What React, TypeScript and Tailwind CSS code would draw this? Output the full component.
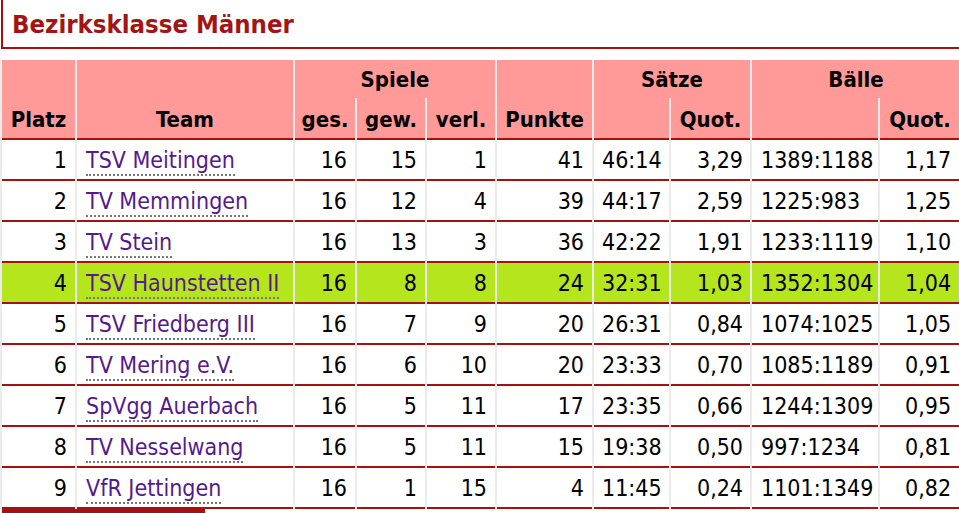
import React from "react";

type Row = [number, string, number, number, number, number, string, string, string, string];

const rows: Row[] = [
  [1, "TSV Meitingen", 16, 15, 1, 41, "46:14", "3,29", "1389:1188", "1,17"],
  [2, "TV Memmingen", 16, 12, 4, 39, "44:17", "2,59", "1225:983", "1,25"],
  [3, "TV Stein", 16, 13, 3, 36, "42:22", "1,91", "1233:1119", "1,10"],
  [4, "TSV Haunstetten II", 16, 8, 8, 24, "32:31", "1,03", "1352:1304", "1,04"],
  [5, "TSV Friedberg III", 16, 7, 9, 20, "26:31", "0,84", "1074:1025", "1,05"],
  [6, "TV Mering e.V.", 16, 6, 10, 20, "23:33", "0,70", "1085:1189", "0,91"],
  [7, "SpVgg Auerbach", 16, 5, 11, 17, "23:35", "0,66", "1244:1309", "0,95"],
  [8, "TV Nesselwang", 16, 5, 11, 15, "19:38", "0,50", "997:1234", "0,81"],
  [9, "VfR Jettingen", 16, 1, 15, 4, "11:45", "0,24", "1101:1349", "0,82"],
];

const font = {
  fontFamily: "'DejaVu Sans Condensed', 'DejaVu Sans', sans-serif",
};

export default function App() {
  return (
    <div
      className="w-[959px] h-[513px] overflow-hidden bg-white font-stretch-condensed"
      style={font}
    >
      <div className="ml-px border-l-2 border-b-2 border-[#a51111] pl-[9px] pt-[10px] pb-[8px]">
        <h1 className="text-[25.5px] leading-[29px] font-bold text-[#a31515]">
          Bezirksklasse Männer
        </h1>
      </div>
      <table className="mt-[11px] table-fixed border-separate border-spacing-x-[2px] border-spacing-y-0 bg-[#ebebeb] w-[962px] text-[22px] leading-[26px] text-black">
        <colgroup>
          <col className="w-[73px]" />
          <col className="w-[216px]" />
          <col className="w-[60px]" />
          <col className="w-[68px]" />
          <col className="w-[68px]" />
          <col className="w-[95px]" />
          <col className="w-[75px]" />
          <col className="w-[79px]" />
          <col className="w-[126px]" />
          <col className="w-[80px]" />
        </colgroup>
        <thead>
          <tr className="h-[38px]">
            <th rowSpan={2} className="bg-[#ff9a98] border-b-2 border-[#a51111] align-bottom pb-[5px] text-center font-bold">
              Platz
            </th>
            <th rowSpan={2} className="bg-[#ff9a98] border-b-2 border-[#a51111] align-bottom pb-[5px] text-center font-bold">
              Team
            </th>
            <th colSpan={3} className="bg-[#ff9a98] align-middle pt-[2px] text-center font-bold">
              Spiele
            </th>
            <th rowSpan={2} className="bg-[#ff9a98] border-b-2 border-[#a51111] align-bottom pb-[5px] text-center font-bold">
              Punkte
            </th>
            <th colSpan={2} className="bg-[#ff9a98] align-middle pt-[2px] text-center font-bold">
              Sätze
            </th>
            <th colSpan={2} className="bg-[#ff9a98] align-middle pt-[2px] text-center font-bold">
              Bälle
            </th>
          </tr>
          <tr className="h-[42px]">
            {["ges.", "gew.", "verl.", "", "Quot.", "", "Quot."].map((t, i) => (
              <th
                key={i}
                className="bg-[#ff9a98] border-b-2 border-[#a51111] align-bottom pb-[5px] text-center font-bold"
              >
                {t}
              </th>
            ))}
          </tr>
        </thead>
        <tbody className="text-[23px]">
          {rows.map((r) => {
            const bg = r[0] === 4 ? "bg-[#b5e61d]" : "bg-white";
            const cell = `${bg} border-b-2 border-[#a51111] align-middle pt-px`;
            return (
              <tr key={r[0]} className="h-[41px]">
                <td className={`${cell} text-right pr-[8px]`}>{r[0]}</td>
                <td className={`${cell} text-left pl-[9px]`}>
                  <a className="text-[#551a8b] border-b-2 border-dotted border-[#777777] pb-px">
                    {r[1]}
                  </a>
                </td>
                <td className={`${cell} text-right pr-[8px]`}>{r[2]}</td>
                <td className={`${cell} text-right pr-[8px]`}>{r[3]}</td>
                <td className={`${cell} text-right pr-[8px]`}>{r[4]}</td>
                <td className={`${cell} text-right pr-[8px]`}>{r[5]}</td>
                <td className={`${cell} text-left pl-[8px]`}>{r[6]}</td>
                <td className={`${cell} text-right pr-[7px]`}>{r[7]}</td>
                <td className={`${cell} text-left pl-[9px]`}>{r[8]}</td>
                <td className={`${cell} text-right pr-[9px]`}>{r[9]}</td>
              </tr>
            );
          })}
        </tbody>
      </table>
      <div className="ml-[2px] h-[4px] w-[203px] bg-[#a51111]" />
    </div>
  );
}
